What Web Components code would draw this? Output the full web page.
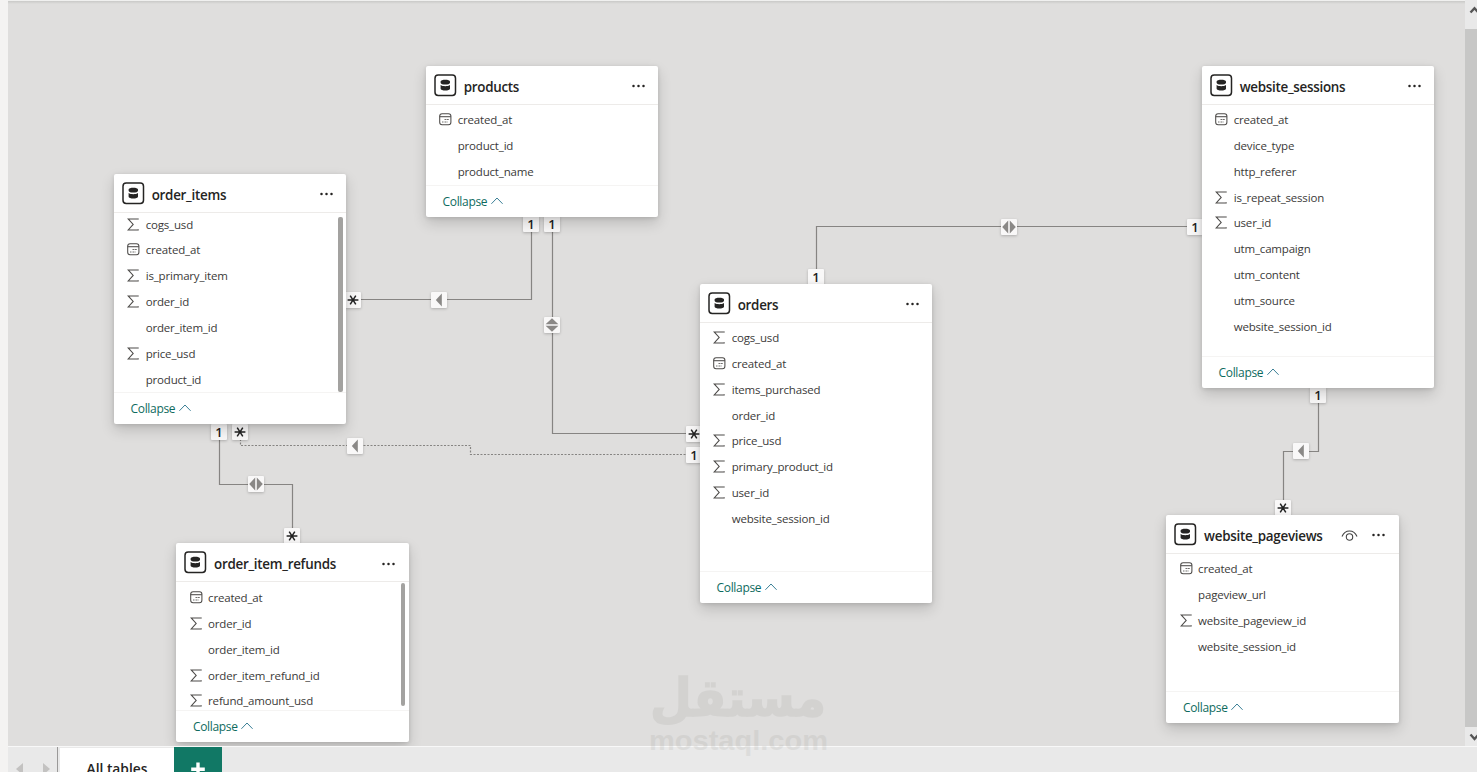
<!DOCTYPE html>
<html lang="en">
<head>
<meta charset="utf-8">
<title>Model view</title>
<style>
	html, body {
		margin: 0;
		height: 100%;
		overflow: hidden;
		font-family: "Open Sans", "Noto Sans", sans-serif;
		color: #3b3a39;
	}
</style>
</head>
<body>
<model-view>
	<link-line d="M523.5 217V299.5H338"></link-line>
	<link-line d="M544.5 217V433.5H692"></link-line>
	<link-line d="M808.5 284V226.5H1194"></link-line>
	<link-line d="M1310.5 388V451.5H1275.5V515"></link-line>
	<link-line d="M211.5 424V484.5H284.5V543"></link-line>
	<link-line dotted d="M232.5 432V445.5H462.5V454.5H692"></link-line>

	<link-badge kind="one" x="523" y="224"></link-badge>
	<link-badge kind="one" x="544" y="224"></link-badge>
	<link-badge kind="left" x="431" y="299.5"></link-badge>
	<link-badge kind="many" x="345" y="299.5"></link-badge>
	<link-badge kind="updown" x="544" y="325"></link-badge>
	<link-badge kind="many" x="686" y="433.5"></link-badge>
	<link-badge kind="one" x="686" y="454.5"></link-badge>
	<link-badge kind="one" x="808" y="276.5"></link-badge>
	<link-badge kind="both" x="1001" y="227"></link-badge>
	<link-badge kind="one" x="1187" y="227"></link-badge>
	<link-badge kind="one" x="1310" y="395"></link-badge>
	<link-badge kind="left" x="1292.5" y="451"></link-badge>
	<link-badge kind="many" x="1275" y="508"></link-badge>
	<link-badge kind="one" x="211" y="432"></link-badge>
	<link-badge kind="many" x="232" y="432"></link-badge>
	<link-badge kind="left" x="347" y="445.5"></link-badge>
	<link-badge kind="both" x="248" y="484"></link-badge>
	<link-badge kind="many" x="284" y="536"></link-badge>

	<table-card x="418" y="66" h="151" name="products">
		<table-field type="date">created_at</table-field>
		<table-field>product_id</table-field>
		<table-field>product_name</table-field>
	</table-card>
	<table-card x="106" y="174" h="250.4" name="order_items" scroll="3.6" bar="4 175">
		<table-field type="sum">cogs_usd</table-field>
		<table-field type="date">created_at</table-field>
		<table-field type="sum">is_primary_item</table-field>
		<table-field type="sum">order_id</table-field>
		<table-field>order_item_id</table-field>
		<table-field type="sum">price_usd</table-field>
		<table-field>product_id</table-field>
	</table-card>
	<table-card x="692" y="284" h="319.4" name="orders">
		<table-field type="sum">cogs_usd</table-field>
		<table-field type="date">created_at</table-field>
		<table-field type="sum">items_purchased</table-field>
		<table-field>order_id</table-field>
		<table-field type="sum">price_usd</table-field>
		<table-field type="sum">primary_product_id</table-field>
		<table-field type="sum">user_id</table-field>
		<table-field>website_session_id</table-field>
	</table-card>
	<table-card x="1194" y="66" h="322" name="website_sessions">
		<table-field type="date">created_at</table-field>
		<table-field>device_type</table-field>
		<table-field>http_referer</table-field>
		<table-field type="sum">is_repeat_session</table-field>
		<table-field type="sum">user_id</table-field>
		<table-field>utm_campaign</table-field>
		<table-field>utm_content</table-field>
		<table-field>utm_source</table-field>
		<table-field>website_session_id</table-field>
	</table-card>
	<table-card x="1158.4" y="515" h="208.4" name="website_pageviews" hidden-eye>
		<table-field type="date">created_at</table-field>
		<table-field>pageview_url</table-field>
		<table-field type="sum">website_pageview_id</table-field>
		<table-field>website_session_id</table-field>
	</table-card>
	<table-card x="168.4" y="543.4" h="198.5" name="order_item_refunds" scroll="-0.5" bar="1 123">
		<table-field type="date">created_at</table-field>
		<table-field type="sum">order_id</table-field>
		<table-field>order_item_id</table-field>
		<table-field type="sum">order_item_refund_id</table-field>
		<table-field type="sum">refund_amount_usd</table-field>
	</table-card>

	<scroll-rail slot="rail"></scroll-rail>
	<page-tabs slot="tabs">All tables</page-tabs>
	<site-watermark slot="mark"></site-watermark>
</model-view>

<script>
class ModelView extends HTMLElement {
	constructor() {
		super();
		this.attachShadow({ mode: "open" });
		this.shadowRoot.innerHTML = `
			<style>
			:host{
				display: grid;
				grid-template: 1fr 26px / 8px 1fr 12px;
				height: 100vh;
				position: relative;
				overflow: hidden;
				background: #f4f3f2;
			}
			.canvas{
				position: relative;
				overflow: hidden;
				background: #dfdedd;
				grid-column: 2;
			}
			.top-edge{
				position: absolute;
				top: 0;
				left: 0;
				right: 0;
				height: 4px;
				background: linear-gradient(#f0f0ef 0 1px, #c9c9c7 1px, #dfdedd);
			}
			.tabs{
				grid-column: 2 / 4;
			}
			</style>
			<div class="canvas"><div class="top-edge"></div><slot></slot></div>
			<slot name="rail"></slot>
			<div class="tabs"><slot name="tabs"></slot></div>
			<slot name="mark"></slot>
		`;
	}
}

class LinkLine extends HTMLElement {
	constructor() {
		super();
		this.attachShadow({ mode: "open" });
	}
	connectedCallback() {
		const dash = this.hasAttribute("dotted") ? "2 1.5" : "none";
		this.shadowRoot.innerHTML = `
			<style>
			:host{ position: absolute; inset: 0; }
			svg{ display: block; width: 100%; height: 100%; }
			</style>
			<svg><path d="${this.getAttribute("d")}" fill="none" stroke="#868482" stroke-width="1.2" stroke-dasharray="${dash}"/></svg>
		`;
	}
}

const badgeMarks = {
	many: `<path d="M2.6 8H13.4M5.2 3.6L10.8 12.4M10.8 3.6L5.2 12.4" stroke="#222" stroke-width="1.5"/>`,
	left: `<path d="M10.8 1.4V14.6L4.8 8Z" fill="#8a8886"/>`,
	both: `<path d="M7.2 1.6V14.4L1.2 8ZM8.8 1.6V14.4L14.8 8Z" fill="#8a8886"/>`,
	updown: `<path d="M1.6 7.2H14.4L8 1.2ZM1.6 8.8H14.4L8 14.8Z" fill="#8a8886"/>`,
};

class LinkBadge extends HTMLElement {
	constructor() {
		super();
		this.attachShadow({ mode: "open" });
	}
	connectedCallback() {
		const kind = this.getAttribute("kind");
		this.style.left = this.getAttribute("x") - 8 + "px";
		this.style.top = this.getAttribute("y") - 8 + "px";
		this.shadowRoot.innerHTML = `
			<style>
			:host{
				position: absolute;
				width: 16px;
				height: 16px;
				display: flex;
				align-items: center;
				justify-content: center;
				background: #f9f8f8;
				border-radius: 1px;
				box-shadow: 0 1px 3px rgba(0,0,0,.22);
				font: 600 13px/16px "Open Sans", sans-serif;
				color: #222;
			}
			</style>
			${kind === "one" ? "<span>1</span>" : `<svg width="16" height="16" viewBox="0 0 16 16">${badgeMarks[kind]}</svg>`}
		`;
	}
}

class TableCard extends HTMLElement {
	constructor() {
		super();
		this.attachShadow({ mode: "open" });
	}
	connectedCallback() {
		this.style.left = this.getAttribute("x") + "px";
		this.style.top = this.getAttribute("y") + "px";
		this.style.height = this.getAttribute("h") + "px";
		const [barTop, barHeight] = (this.getAttribute("bar") || "0 0").split(" ");
		const eye = `<svg width="17" height="14" viewBox="0 0 17 14" fill="none" stroke="#444" stroke-width="1.1">
			<path d="M1 7.5C2.6 3.8 5.2 2 8.5 2S14.4 3.8 16 7.5"/><circle cx="8.5" cy="8" r="3.2"/></svg>`;
		this.shadowRoot.innerHTML = `
			<style>
			:host{
				position: absolute;
				width: 232.4px;
				display: flex;
				flex-direction: column;
				background: #fff;
				border-radius: 2px;
				box-shadow: 0 6px 14px rgba(0,0,0,.16), 0 1px 4px rgba(0,0,0,.12);
			}
			header{
				display: flex;
				align-items: center;
				height: 38.6px;
				padding: 1px 12.5px 0 8px;
				box-sizing: border-box;
				border-bottom: 1px solid #edebe9;
				flex: none;
			}
			h2{
				flex: 1;
				margin: 3px 0 0 6.7px;
				font-size: 13.4px;
				line-height: 20px;
				font-weight: 600;
				letter-spacing: -0.28px;
				color: #252423;
				white-space: nowrap;
			}
			.eye{ display: flex; margin: 3px 13px 0 0; }
			.dots{ margin-top: 2px; }
			.list{
				flex: 1;
				min-height: 0;
				overflow: hidden;
				display: flex;
				padding-right: 3.5px;
			}
			.rows{
				flex: 1;
				padding-top: 2.1px;
				margin-top: ${-(this.getAttribute("scroll") || 0)}px;
			}
			.thumb{
				width: 4.5px;
				height: ${barHeight}px;
				margin-top: ${barTop}px;
				border-radius: 2px;
				background: #a3a2a0;
			}
			footer{
				flex: none;
				height: 32px;
				box-sizing: border-box;
				border-top: 1px solid #f5f4f3;
				padding: 0 0 0 16.5px;
				display: flex;
				align-items: center;
				gap: 3.5px;
				font-size: 12px;
				letter-spacing: -0.32px;
				color: #0e6b5e;
			}
			footer svg{ margin-top: -1px; }
			</style>
			<header>
				<svg width="23" height="23" viewBox="0 0 23 23">
					<rect x="1" y="1" width="20.5" height="20.5" rx="3.2" fill="#fff" stroke="#252423" stroke-width="1.5"/>
					<path d="M6.6 7.6C6.6 5.2 16 5.2 16 7.6V8.7C16 11.2 6.6 11.2 6.6 8.7ZM6.6 11.1C8.6 12.7 14 12.7 16 11.1V14.8C16 17.2 6.6 17.2 6.6 14.8Z" fill="#252423"/>
				</svg>
				<h2>${this.getAttribute("name")}</h2>
				${this.hasAttribute("hidden-eye") ? `<span class="eye">${eye}</span>` : ""}
				<svg class="dots" width="15" height="4" viewBox="0 0 15 4" fill="#252423"><circle cx="2.5" cy="2" r="1.25"/><circle cx="7.5" cy="2" r="1.25"/><circle cx="12.5" cy="2" r="1.25"/></svg>
			</header>
			<div class="list">
				<div class="rows"><slot></slot></div>
				<div class="thumb"></div>
			</div>
			<footer>
				<span>Collapse</span>
				<svg width="12" height="8" viewBox="0 0 12 8" fill="none" stroke="#3a7f96" stroke-width="1"><path d="M.4 6.8L6 1L11.6 6.8"/></svg>
			</footer>
		`;
	}
}

const fieldIcons = {
	sum: `<path d="M11.2 1.6V.9H1.2L6.2 6.4L1.2 11.9H11.2V11.2"/>`,
	date: `<rect x=".7" y=".7" width="11.2" height="11" rx="2.4"/><path d="M.7 3.7H11.9"/><path d="M5.6 6.5H6.8M7.6 6.5H8.8M9.4 6.5H10M3.2 9H4.4M5.6 9H6.8M7.6 9H8.4" stroke-width="1.2"/>`,
};

class TableField extends HTMLElement {
	constructor() {
		super();
		this.attachShadow({ mode: "open" });
	}
	connectedCallback() {
		this.shadowRoot.innerHTML = `
			<style>
			:host{
				display: flex;
				align-items: center;
				height: 25.85px;
				padding-left: 13.3px;
				gap: 5.4px;
				font-size: 11.5px;
				letter-spacing: -0.18px;
				color: #3b3a39;
				white-space: nowrap;
			}
			svg{ flex: none; }
			</style>
			<svg width="13" height="13" viewBox="0 0 13 13" fill="none" stroke="#4d4b49" stroke-width="1.05">${fieldIcons[this.getAttribute("type")] || ""}</svg>
			<span><slot></slot></span>
		`;
	}
}

class ScrollRail extends HTMLElement {
	constructor() {
		super();
		this.attachShadow({ mode: "open" });
		this.shadowRoot.innerHTML = `
			<style>
			:host{ display: flex; flex-direction: column; overflow: hidden; background: #e9e9e9; }
			svg{ display: block; flex: none; }
			.thumb{ flex: 1; background: #c7c7c6; }
			</style>
			<svg width="12" height="29"><path d="M5.5 12.5L9.5 8.2L13.5 12.5" fill="none" stroke="#555" stroke-width="2.4"/></svg>
			<div class="thumb"></div>
			<svg width="12" height="19"><path d="M5.5 7.5L9.5 12L13.5 7.5" fill="none" stroke="#555" stroke-width="2.4"/></svg>
		`;
	}
}

class PageTabs extends HTMLElement {
	constructor() {
		super();
		this.attachShadow({ mode: "open" });
		this.shadowRoot.innerHTML = `
			<style>
			:host{
				display: flex;
				height: 26px;
				box-sizing: border-box;
				border-top: 1px solid #f8f8f8;
				background: #e9e9e9;
				overflow: hidden;
			}
			.nav{
				display: flex;
				gap: 20px;
				width: 50px;
				padding: 16px 0 0 7.5px;
				box-sizing: border-box;
				border-right: 1px solid #9a9998;
			}
			.tab{
				width: 114px;
				margin: 1px 0 0 2px;
				background: #fff;
				font-size: 13.8px;
				font-weight: 600;
				line-height: 20px;
				padding-top: 11px;
				box-sizing: border-box;
				text-align: center;
				color: #252423;
				white-space: nowrap;
			}
			.add{ width: 48px; background: #117865; display: flex; justify-content: center; }
			</style>
			<div class="nav">
				<svg width="7" height="12"><path d="M7 0V12L0 6Z" fill="#c3c2c1"/></svg>
				<svg width="7" height="12"><path d="M0 0V12L7 6Z" fill="#c3c2c1"/></svg>
			</div>
			<div class="tab"><slot></slot></div>
			<div class="add"><svg width="16" height="32"><path d="M8 15.5V29M1.2 22.2H14.8" stroke="#fff" stroke-width="3.4"/></svg></div>
		`;
	}
}

class SiteWatermark extends HTMLElement {
	constructor() {
		super();
		this.attachShadow({ mode: "open" });
		this.shadowRoot.innerHTML = `
			<style>
			:host{ position: absolute; left: 640px; top: 664px; opacity: .065; pointer-events: none; }
			svg{ display: block; }
			</style>
			<svg width="200" height="104" viewBox="0 0 200 104" fill="#3a3a30">
				<text x="98" y="52" font-family="DejaVu Sans" font-weight="700" font-size="52" text-anchor="middle" textLength="176" lengthAdjust="spacingAndGlyphs" direction="rtl" stroke="#3a3a30" stroke-width="1.5">مستقل</text>
				<text x="9" y="86" font-family="Liberation Sans" font-weight="700" font-size="27" textLength="179" lengthAdjust="spacingAndGlyphs">mostaql.com</text>
			</svg>
		`;
	}
}

customElements.define("model-view", ModelView);
customElements.define("link-line", LinkLine);
customElements.define("link-badge", LinkBadge);
customElements.define("table-card", TableCard);
customElements.define("table-field", TableField);
customElements.define("scroll-rail", ScrollRail);
customElements.define("page-tabs", PageTabs);
customElements.define("site-watermark", SiteWatermark);
</script>
</body>
</html>
